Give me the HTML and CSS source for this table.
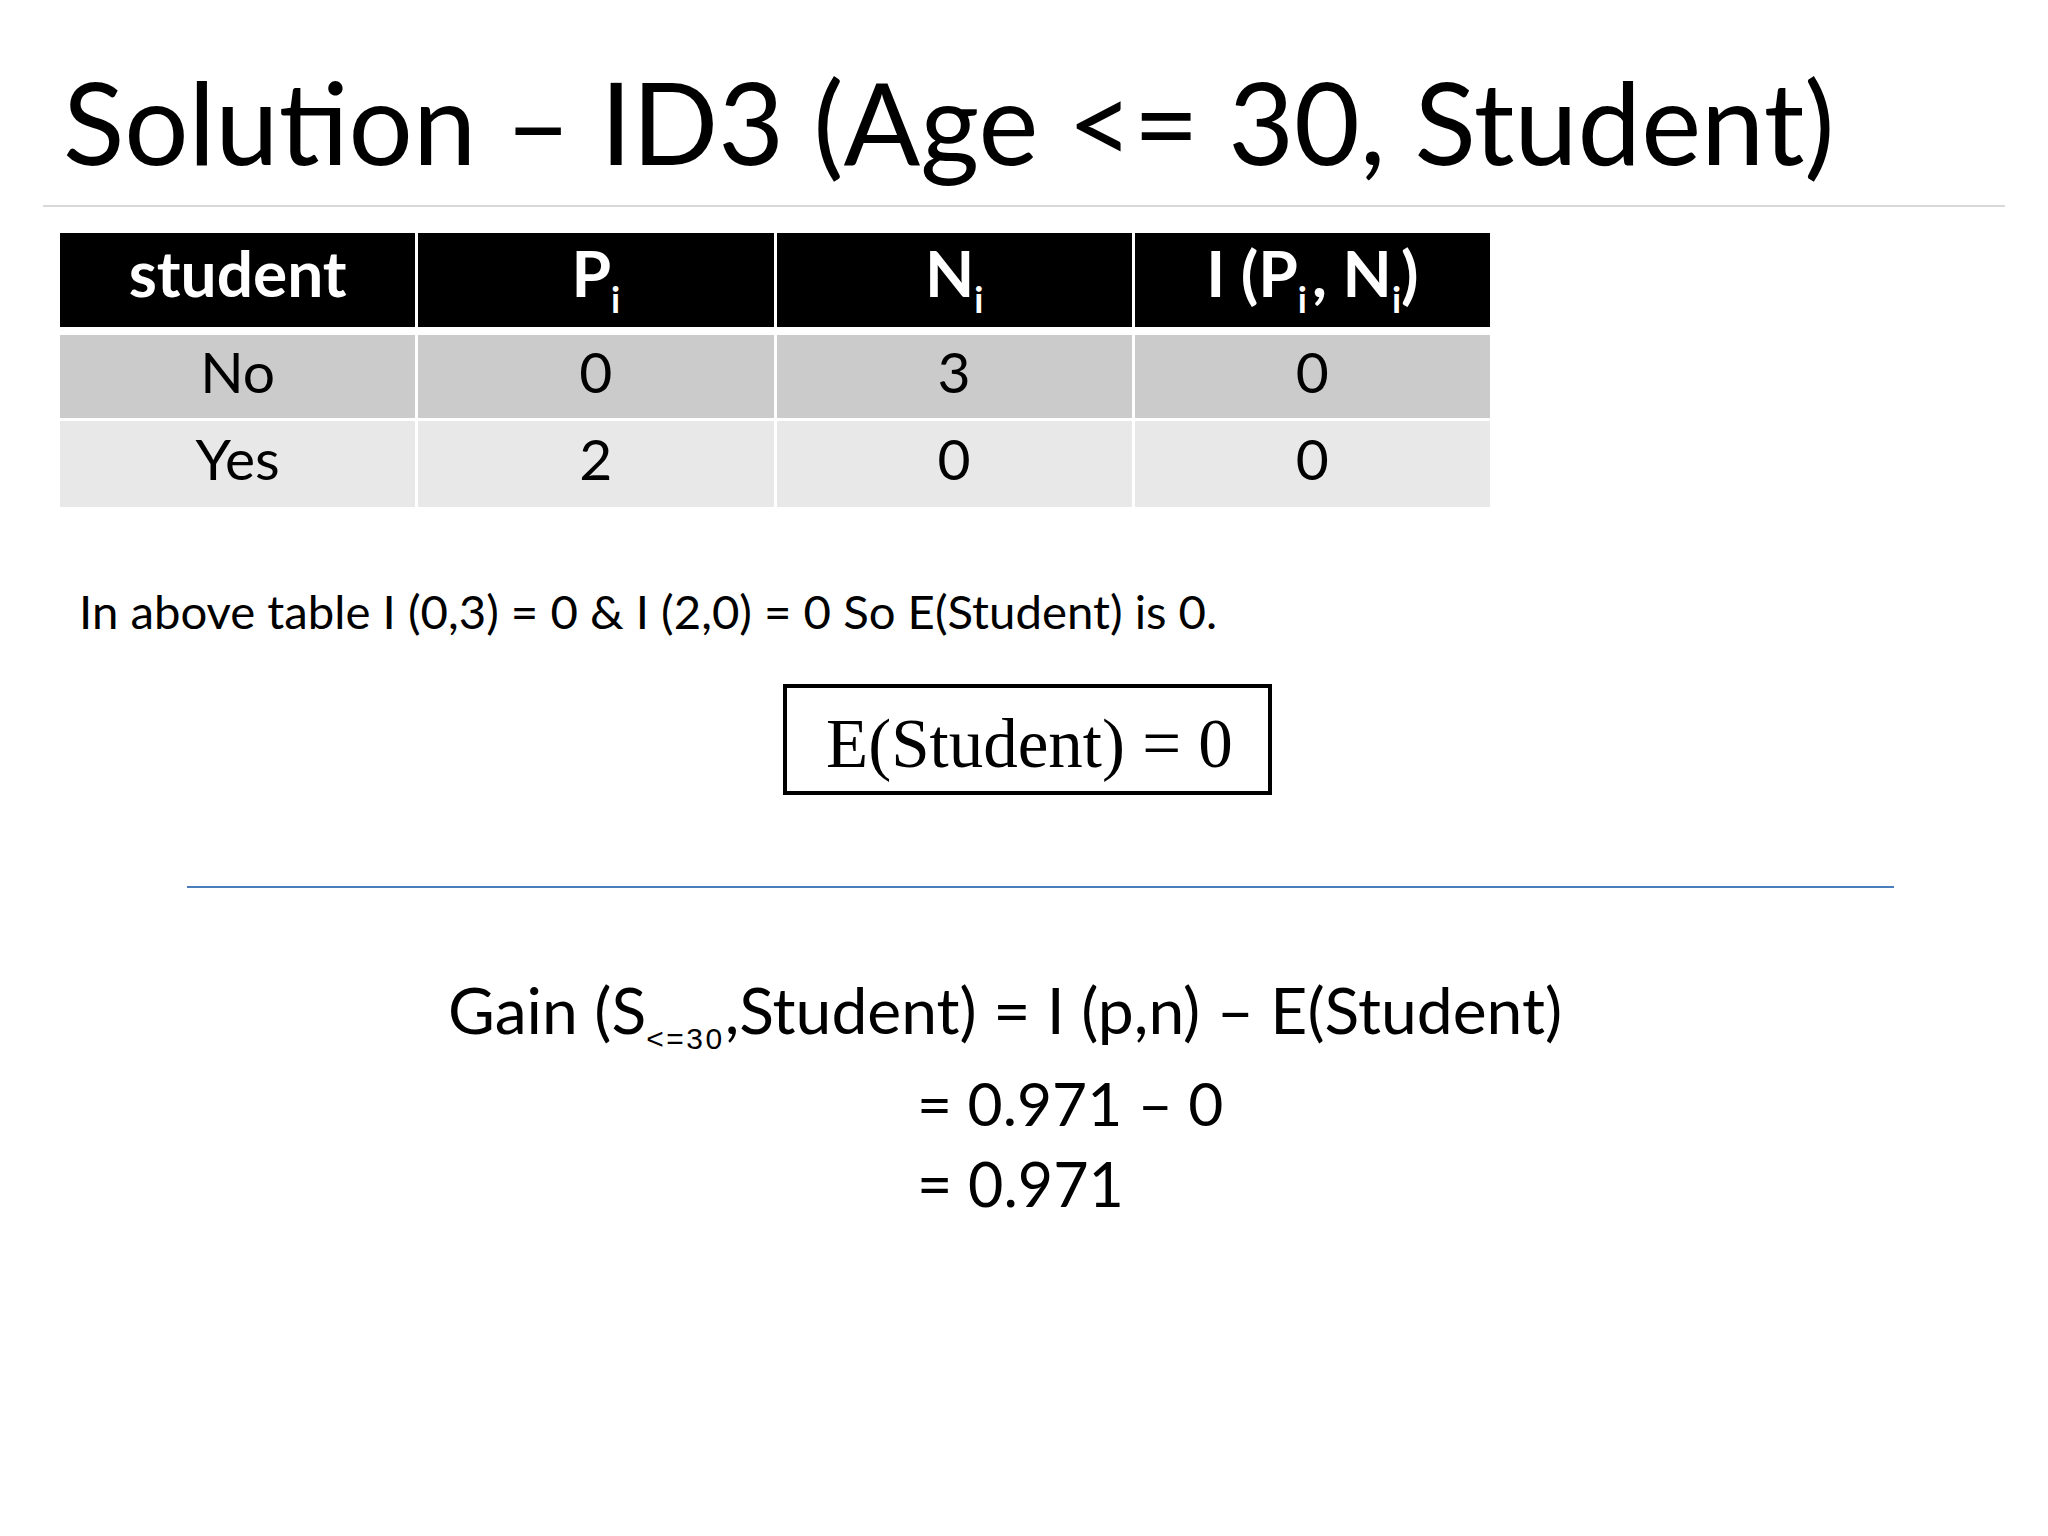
FILE: index.html
```html
<!DOCTYPE html>
<html>
<head>
<meta charset="utf-8">
<link rel="stylesheet" href="styles.css">
</head>
<body>
<div class="slide">
  <h1 class="title">Solution – ID3 (Age &lt;= 30, Student)</h1>
  <div class="rule"></div>
  <div class="table">
    <div class="row head">
      <div class="cell"><span>student</span></div>
      <div class="cell"><span>P<sub class="hs">i</sub></span></div>
      <div class="cell"><span>N<sub class="hs">i</sub></span></div>
      <div class="cell"><span>I (P<sub class="hs">i</sub><span class="cm">,</span> N<sub class="hs">i</sub>)</span></div>
    </div>
    <div class="row r1">
      <div class="cell"><span>No</span></div>
      <div class="cell"><span>0</span></div>
      <div class="cell"><span>3</span></div>
      <div class="cell"><span>0</span></div>
    </div>
    <div class="row r2">
      <div class="cell"><span>Yes</span></div>
      <div class="cell"><span>2</span></div>
      <div class="cell"><span>0</span></div>
      <div class="cell"><span>0</span></div>
    </div>
  </div>
  <p class="note">In above table I (0,3) = 0 &amp; I (2,0) = 0 So E(Student) is 0.</p>
  <div class="boxwrap"><div class="box">E(Student) = 0</div></div>
  <div class="blue"></div>
  <div class="gain">
    <div class="g1">Gain (S<sub class="gs">&lt;=30</sub>,Student) = I (p,n) – E(Student)</div>
    <div class="g2">= 0.971 – 0</div>
    <div class="g3">= 0.971</div>
  </div>
</div>
</body>
</html>
```
FILE: styles.css
```css
html, body {
  margin: 0;
  padding: 0;
  background: #ffffff;
}
.slide {
  width: 2048px;
  height: 1536px;
  background: #ffffff;
  font-family: "Lato", "Carlito", "Noto Sans", sans-serif;
  color: #000;
  overflow: hidden;
}
.title {
  margin: 53px 0 0 63px;
  font-size: 113.5px;
  font-weight: 400;
  line-height: 136px;
  height: 136px;
  white-space: nowrap;
}
.rule {
  margin: 16px 0 0 43px;
  width: 1962px;
  height: 2px;
  background: #d9d9d9;
}
.table {
  margin: 26px 0 0 60px;
  width: 1430px;
  display: flex;
  flex-direction: column;
}
.row {
  display: grid;
  grid-template-columns: repeat(4, 1fr);
  column-gap: 3px;
}
.cell {
  display: flex;
  align-items: center;
  justify-content: center;
  white-space: nowrap;
}
.head .cell {
  background: #000;
  color: #fff;
  height: 94px;
  font-size: 64px;
  font-weight: 700;
  box-sizing: border-box;
  padding-bottom: 16px;
}
.hs {
  font-size: 36px;
  font-weight: 700;
  line-height: 0;
  vertical-align: -16px;
}
.cm {
  margin-left: 5px;
}
.r1 {
  margin-top: 8px;
}
.r1 .cell {
  background: #cbcbcb;
  height: 83px;
}
.r2 {
  margin-top: 3px;
}
.r2 .cell {
  background: #e8e8e8;
  height: 86px;
}
.r1 .cell, .r2 .cell {
  font-size: 57px;
  box-sizing: border-box;
  padding-bottom: 12px;
}
.note {
  margin: 76px 0 0 79px;
  font-size: 47.3px;
  line-height: 56px;
  white-space: nowrap;
}
.boxwrap {
  margin: 45px 0 0 783px;
}
.box {
  width: 489px;
  height: 111px;
  box-sizing: border-box;
  border: 4px solid #000;
  padding: 18px 0 0 39px;
  font-family: "Liberation Serif", "Times New Roman", serif;
  font-size: 69px;
  line-height: 76px;
  white-space: nowrap;
}
.blue {
  margin: 91px 0 0 187px;
  width: 1707px;
  height: 2px;
  background: #4a7ebb;
}
.gain {
  margin: 84px 0 0 0;
}
.g1 {
  padding-left: 448px;
  font-size: 64.2px;
  line-height: 76px;
  white-space: nowrap;
}
.gs {
  font-family: "Liberation Sans", Arial, sans-serif;
  font-size: 30px;
  letter-spacing: 2.5px;
  line-height: 0;
  vertical-align: -15px;
}
.g2 {
  margin-top: 14px;
  padding-left: 917px;
  font-size: 60.5px;
  line-height: 81px;
  white-space: nowrap;
}
.g3 {
  padding-left: 917px;
  font-size: 61px;
  line-height: 81px;
  white-space: nowrap;
}
```
